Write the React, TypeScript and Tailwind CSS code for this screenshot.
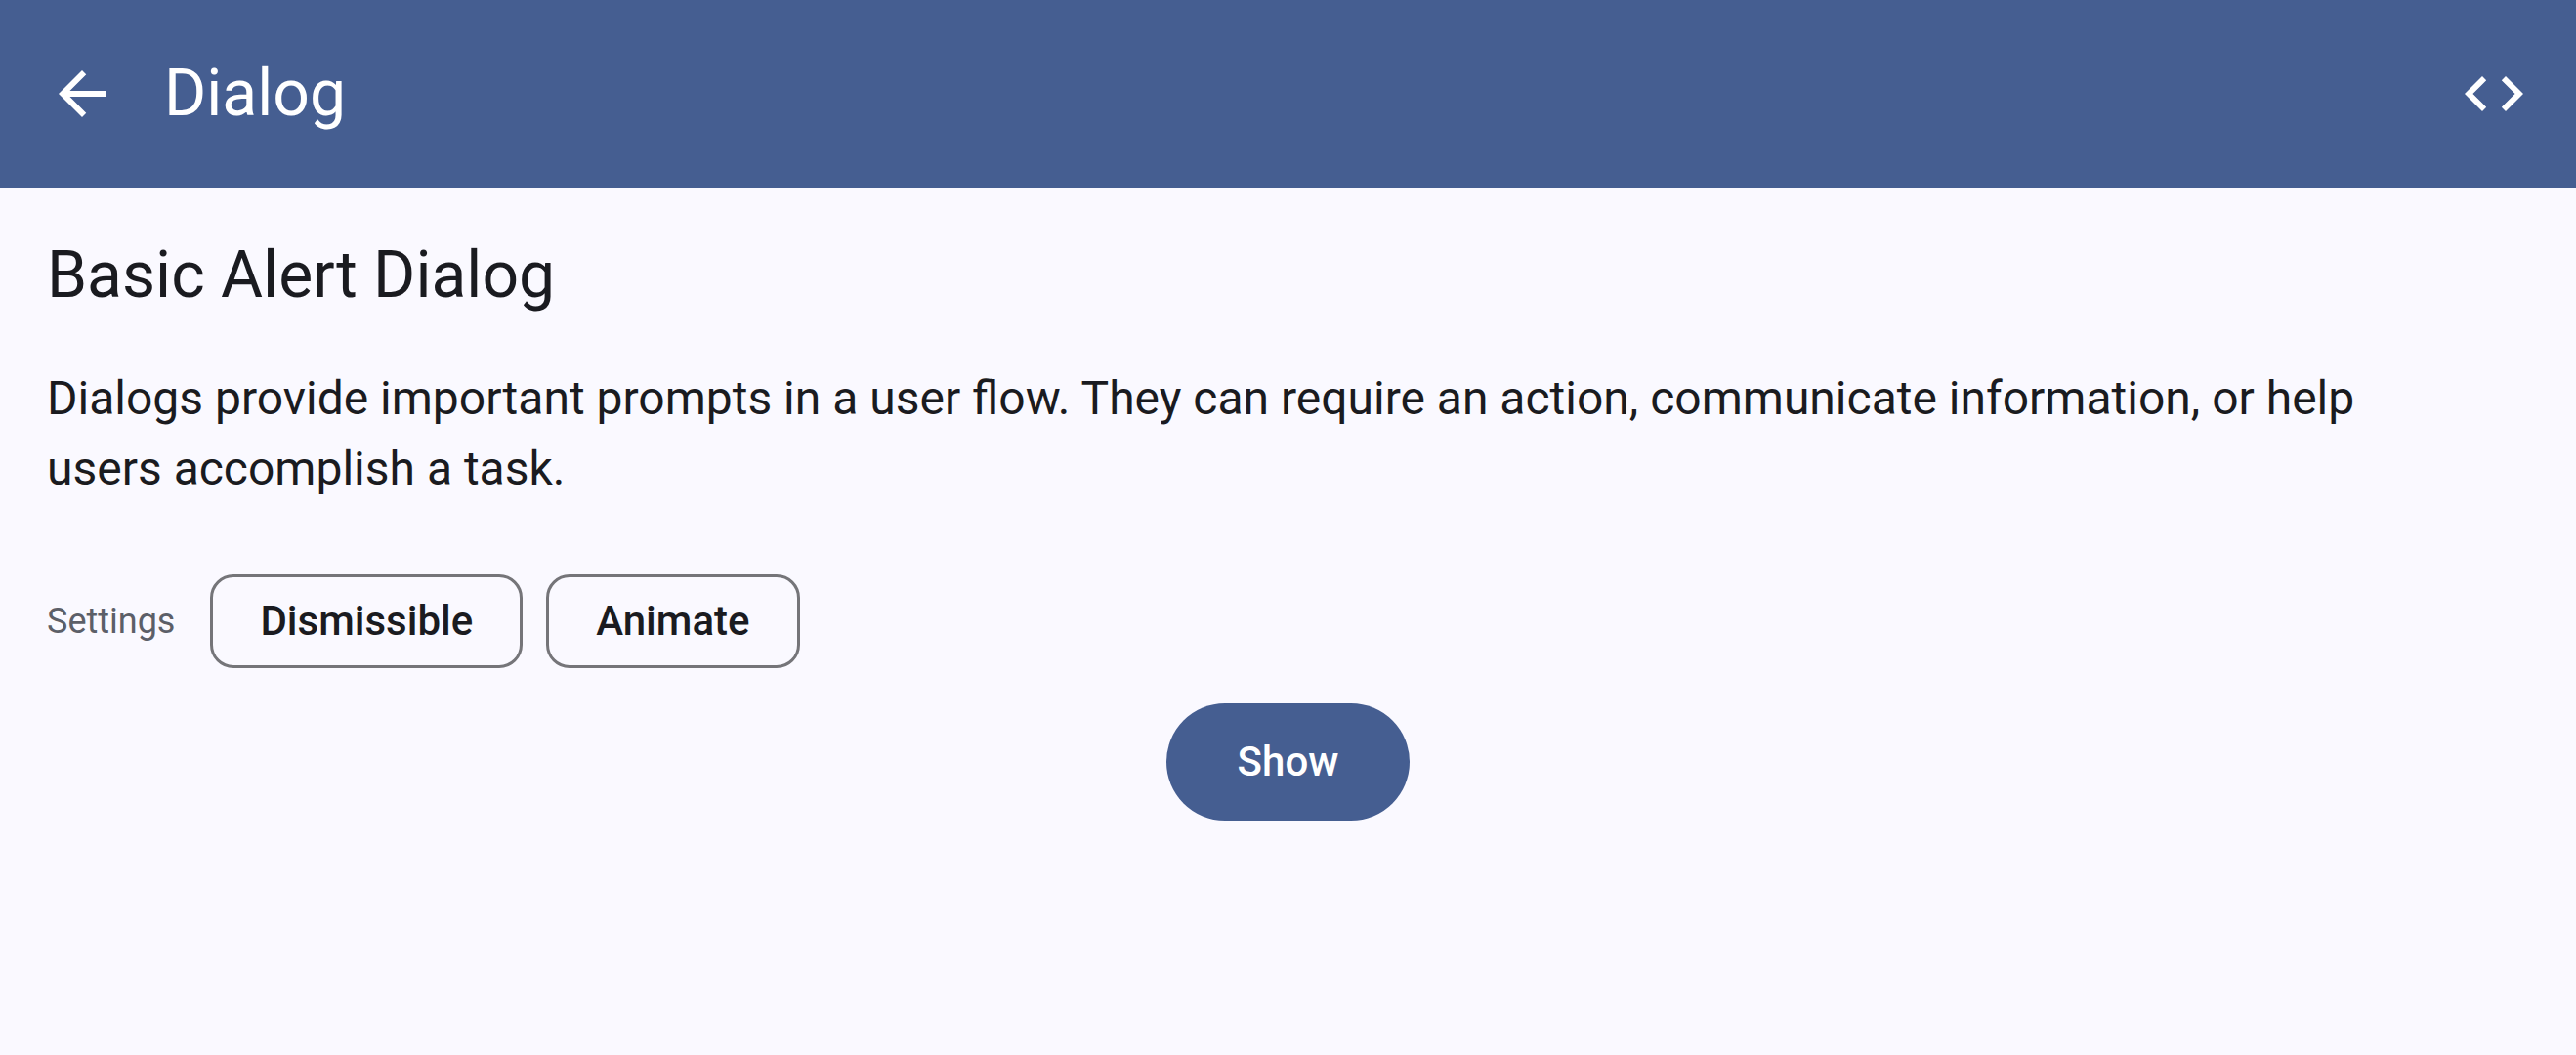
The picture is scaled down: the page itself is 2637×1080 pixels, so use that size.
import { useState } from "react";

function ArrowBackIcon() {
  return (
    <svg viewBox="0 0 24 24" className="size-18 fill-current" aria-hidden="true">
      <path d="M20 11H7.83l5.59-5.59L12 4l-8 8 8 8 1.41-1.41L7.83 13H20v-2z" />
    </svg>
  );
}

function CodeIcon() {
  return (
    <svg viewBox="0 0 24 24" className="size-18 fill-current" aria-hidden="true">
      <path d="M9.4 16.6 4.8 12l4.6-4.6L8 6l-6 6 6 6 1.4-1.4zm5.2 0 4.6-4.6-4.6-4.6L16 6l6 6-6 6-1.4-1.4z" />
    </svg>
  );
}

function Chip({ label }: { label: string }) {
  const [selected, setSelected] = useState(false);
  return (
    <button
      type="button"
      aria-pressed={selected}
      onClick={() => setSelected(!selected)}
      className="h-24 rounded-3xl border-3 border-[#757579] px-12 text-[42px] leading-15 font-medium text-[#1a1b20] aria-pressed:bg-[#dae2f9]"
    >
      {label}
    </button>
  );
}

export default function App() {
  return (
    <div className="min-h-screen bg-[#faf9ff] font-[Roboto,sans-serif] text-[#1a1b20]">
      <header className="flex h-48 items-center bg-[#455e91] px-3 text-white">
        <button type="button" aria-label="Back" className="flex size-36 items-center justify-center rounded-full">
          <ArrowBackIcon />
        </button>
        <h1 className="ml-3 flex-1 text-[66px] leading-21">Dialog</h1>
        <button type="button" aria-label="View source" className="flex size-36 items-center justify-center rounded-full">
          <CodeIcon />
        </button>
      </header>
      <main className="flex flex-col p-12">
        <h2 className="text-[66px] leading-21">Basic Alert Dialog</h2>
        <p className="mt-12 pr-24 text-5xl leading-18">
          Dialogs provide important prompts in a user flow. They can require an action, communicate information, or help
          users accomplish a task.
        </p>
        <div className="mt-18 flex items-center gap-9">
          <span id="settings-label" className="text-4xl leading-12 text-[#5c5f68]">
            Settings
          </span>
          <div role="group" aria-labelledby="settings-label" className="flex gap-6">
            <Chip label="Dismissible" />
            <Chip label="Animate" />
          </div>
        </div>
        <button
          type="button"
          className="mt-9 h-30 self-center rounded-full bg-[#455e91] px-[73px] text-[42px] leading-15 font-medium text-white"
        >
          Show
        </button>
      </main>
    </div>
  );
}
